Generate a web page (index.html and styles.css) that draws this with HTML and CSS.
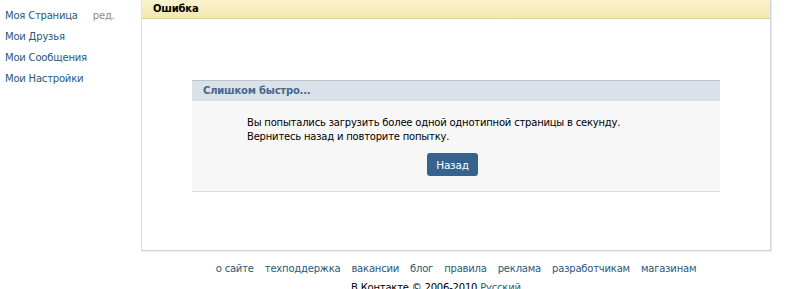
FILE: index.html
```html
<!DOCTYPE html>
<html lang="ru">
<head>
<meta charset="utf-8">
<title>Ошибка</title>
<link rel="stylesheet" href="styles.css">
</head>
<body>
<div class="page">
  <div class="side">
    <div class="nav-item"><a class="nav-link" href="#">Моя Страница</a><a class="edit" href="#">ред.</a></div>
    <div class="nav-item"><a class="nav-link" href="#">Мои Друзья</a></div>
    <div class="nav-item"><a class="nav-link" href="#">Мои Сообщения</a></div>
    <div class="nav-item"><a class="nav-link" href="#">Мои Настройки</a></div>
  </div>
  <div class="main">
    <div class="panel">
      <div class="panel-head">Ошибка</div>
      <div class="panel-body">
        <div class="msg">
          <div class="msg-head">Слишком быстро...</div>
          <div class="msg-body">
            <div class="msg-text">Вы попытались загрузить более одной однотипной страницы в секунду.<br>Вернитесь назад и повторите попытку.</div>
            <div class="btn-row"><button class="btn">Назад</button></div>
          </div>
        </div>
      </div>
    </div>
    <div class="footer">
      <a href="#">о сайте</a><a href="#">техподдержка</a><a href="#">вакансии</a><a href="#">блог</a><a href="#">правила</a><a href="#">реклама</a><a href="#">разработчикам</a><a href="#">магазинам</a>
    </div>
    <div class="copy">В Контакте © 2006-2010 <a href="#">Русский</a></div>
  </div>
</div>
</body>
</html>
```

FILE: styles.css
```css
html, body {
  margin: 0;
  padding: 0;
  background: #fff;
}
body {
  font-family: "DejaVu Sans", Tahoma, sans-serif;
  font-size: 10px;
  letter-spacing: -0.2px;
  color: #000;
  overflow: hidden;
}
a {
  text-decoration: none;
  color: #2b587a;
}
.page {
  display: flex;
  align-items: flex-start;
}
.side {
  width: 136px;
  padding: 8px 0 0 5px;
  display: flex;
  flex-direction: column;
}
.nav-item {
  height: 21px;
  line-height: 15px;
  display: flex;
}
.nav-link {
  color: #2b587a;
}
.edit {
  color: #8a8a8a;
  margin-left: 15px;
}
.main {
  width: 630px;
  display: flex;
  flex-direction: column;
}
.panel {
  border-left: 1px solid #dae1e8;
  border-right: 1px solid #ccd3da;
  border-bottom: 1px solid #ccd3da;
  box-shadow: 1px 1px 0 #e9edf1;
  height: 251px;
  box-sizing: border-box;
}
.panel-head {
  height: 19px;
  line-height: 18px;
  background: linear-gradient(#faf3cd, #f3e8b3);
  border-bottom: 1px solid #e2d59a;
  box-sizing: border-box;
  font-weight: bold;
  padding-left: 11px;
  color: #000;
}
.panel-body {
  padding: 61px 50px 0 50px;
}
.msg {
  width: 528px;
}
.msg-head {
  height: 21px;
  box-sizing: border-box;
  background: #dae1e8;
  border-top: 1px solid #b9c4cf;
  line-height: 19px;
  padding-left: 11px;
  font-weight: bold;
  color: #45688e;
}
.msg-body {
  background: #f7f7f7;
  border-bottom: 1px solid #dddddd;
  height: 91px;
  box-sizing: border-box;
  padding: 15px 0 0 55px;
}
.msg-text {
  line-height: 14px;
  color: #000;
}
.btn-row {
  padding: 9px 0 0 180px;
  display: flex;
}
.btn {
  font-family: inherit;
  font-size: 10.5px;
  letter-spacing: -0.2px;
  color: #fff;
  background: #36638e;
  border: none;
  border-radius: 3px;
  width: 51px;
  height: 23px;
  padding: 0;
  box-shadow: 27px 0 0 -26px #e6e6e6;
}
.footer {
  display: flex;
  justify-content: center;
  gap: 11px;
  padding-top: 10px;
  line-height: 15px;
}
.copy {
  padding: 4px 0 0 210px;
  line-height: 15px;
  color: #000;
}
```
